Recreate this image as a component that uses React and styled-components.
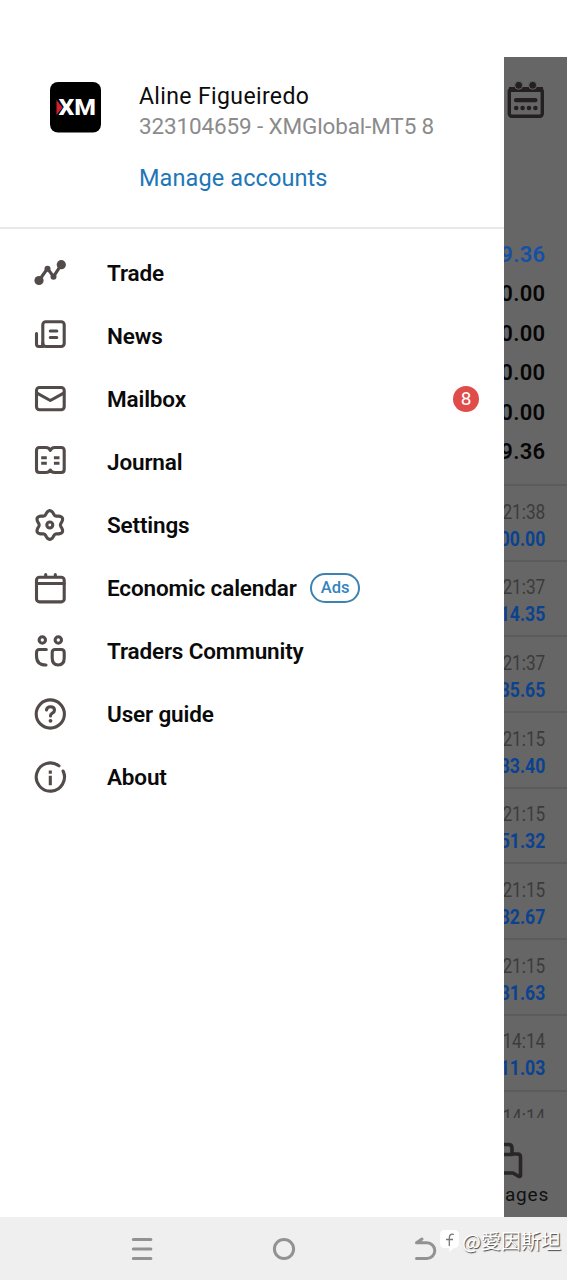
import React from 'react';
import styled, { createGlobalStyle } from 'styled-components';

const GlobalStyle = createGlobalStyle`
  * {
    box-sizing: border-box;
  }
  body {
    margin: 0;
    background: #fff;
    font-family: Roboto, "Liberation Sans", sans-serif;
  }
`;

const Screen = styled.div`
  position: relative;
  display: flex;
  flex-direction: column;
  width: 567px;
  height: 1280px;
  padding-top: 57px;
  overflow: hidden;
`;

const Body = styled.div`
  display: flex;
  height: 1160px;
`;

const Drawer = styled.aside`
  width: 504px;
  background: #fff;
`;

const Profile = styled.header`
  display: flex;
  gap: 38px;
  height: 172px;
  padding: 25px 0 0 50px;
  border-bottom: 2px solid #e8e8e8;
`;

const Logo = styled.svg`
  width: 51px;
  height: 51px;
`;

const ProfileText = styled.div`
  display: flex;
  flex-direction: column;
  white-space: nowrap;
`;

const Name = styled.div`
  margin-top: 1px;
  font-size: 23px;
  line-height: 28px;
  letter-spacing: 0.37px;
  color: #0c0c0c;
`;

const Account = styled.div`
  margin-top: 1px;
  font-size: 22.5px;
  line-height: 28px;
  letter-spacing: -0.14px;
  color: #8b8b8b;
`;

const ManageLink = styled.a`
  margin-top: 24px;
  font-size: 23.5px;
  line-height: 28px;
  letter-spacing: 0.1px;
  color: #2077b8;
`;

const Menu = styled.ul`
  margin: 0;
  padding: 12px 25px 0 32px;
  list-style: none;
`;

const MenuItem = styled.li`
  display: flex;
  align-items: center;
  height: 63px;
`;

const MenuIcon = styled.svg`
  width: 36px;
  height: 36px;
  margin-right: 39px;
  fill: none;
  stroke: #524b4a;
  stroke-width: 3.1;
  stroke-linecap: round;
  stroke-linejoin: round;
`;

const MenuLabel = styled.span`
  font-size: 22.5px;
  font-weight: 600;
  line-height: 28px;
  letter-spacing: -0.15px;
  white-space: nowrap;
  color: #0a0a0a;
`;

const Ads = styled.span`
  display: flex;
  align-items: center;
  justify-content: center;
  width: 50px;
  height: 30px;
  margin-left: 13.5px;
  border: 2px solid #3d82b0;
  border-radius: 15px;
  font-size: 16.5px;
  font-weight: 500;
  color: #3584bd;
`;

const Count = styled.span`
  display: flex;
  align-items: center;
  justify-content: center;
  width: 26px;
  height: 26px;
  margin-left: auto;
  border-radius: 50%;
  background: #e04c4a;
  font-size: 19px;
  color: #fff;
`;

const Behind = styled.section`
  display: flex;
  flex-direction: column;
  width: 63px;
  overflow: hidden;
  background: #666;
`;

const TopBar = styled.div`
  height: 178px;
  padding: 24px 0 0 3px;
`;

const Balance = styled.div`
  display: flex;
  flex-direction: column;
  height: 249px;
  padding-right: 21.5px;
`;

const BalanceValue = styled.div`
  display: flex;
  justify-content: flex-end;
  font-size: 22px;
  font-weight: 600;
  line-height: 39.4px;
  letter-spacing: 0.3px;
  color: ${({ $blue }) => ($blue ? '#1550a8' : '#060606')};
`;

const Deals = styled.div`
  height: 634px;
  overflow: hidden;
`;

const Deal = styled.div`
  display: flex;
  flex-direction: column;
  align-items: flex-end;
  height: 75.7px;
  padding: 12.5px 21.5px 0 0;
  border-top: 2px solid #5c5c5c;
`;

const DealTime = styled.span`
  font-size: 21px;
  line-height: 27px;
  color: #3b3b3b;
  transform: scaleX(0.82);
  transform-origin: right;
`;

const DealValue = styled.span`
  font-size: 21px;
  font-weight: 700;
  line-height: 27px;
  color: #0b4290;
  transform: scaleX(0.84);
  transform-origin: right;
`;

const Tab = styled.div`
  display: flex;
  flex-direction: column;
  align-items: flex-end;
  flex: 1;
  padding: 22px 18px 0 0;
  font-size: 19px;
  line-height: 26px;
  letter-spacing: 0.8px;
  color: #101010;
`;

const TabIcon = styled.svg`
  flex: none;
  width: 44px;
  height: 42px;
  margin-right: 25px;
  fill: none;
  stroke: #2a2626;
  stroke-width: 3.6;
  stroke-linejoin: round;
  stroke-linecap: round;
`;

const NavBar = styled.nav`
  display: flex;
  height: 63px;
  padding: 0 71px;
  background: #efefef;
`;

const NavButton = styled.div`
  display: flex;
  align-items: center;
  justify-content: center;
  flex: 1;
  svg {
    width: 26px;
    height: 26px;
    fill: none;
    stroke: #929292;
    stroke-width: 3;
    stroke-linecap: round;
    stroke-linejoin: round;
  }
`;

const Watermark = styled.div`
  position: absolute;
  right: 6px;
  bottom: 24px;
  display: flex;
  align-items: center;
  gap: 2px;
  font-family: "Noto Sans CJK TC", sans-serif;
  font-size: 20px;
  line-height: 30px;
  color: #fff;
  text-shadow: 1px 1px 1px #444;
`;

// wavy six-tooth outline around (17.8, 18)
const gearPath = () => {
  const points = [];
  for (let i = 0; i < 72; i++) {
    const a = (i * Math.PI) / 36;
    const r = 12.5 + 1.9 * Math.cos(6 * a);
    points.push(`${(17.8 + r * Math.sin(a)).toFixed(2)} ${(18 - r * Math.cos(a)).toFixed(2)}`);
  }
  return `M${points.join('L')}Z`;
};

const icons = {
  trade: (
    <>
      <path d="M7 25.5 15.5 13.5 21.5 21.7 29.3 9.7" />
      <g fill="#524b4a" stroke="none">
        <circle cx="7" cy="25.5" r="4.6" />
        <circle cx="15.5" cy="13.7" r="3" />
        <circle cx="21.5" cy="21.7" r="3" />
        <circle cx="29.3" cy="9.7" r="4.6" />
      </g>
    </>
  ),
  news: (
    <>
      <rect x="10.8" y="3.8" width="21.4" height="24.7" rx="3" />
      <path d="M4.5 15.5V26q0 2.5 2.3 2.5H10.8V25" />
      <path d="M18.3 13h6.5M18.3 19.5h6.5" />
    </>
  ),
  mail: (
    <>
      <rect x="4.5" y="6.5" width="27.7" height="22.3" rx="3" />
      <path d="M5 12.2 18.3 19.5 31.7 12.2" />
    </>
  ),
  journal: (
    <>
      <path d="M18.3 6.5Q17 3.5 14 3.5H7.5q-3 0-3 3v19q0 3 3 3H14q3 0 4.3-2.5 1.3 2.5 4.3 2.5h6.6q3 0 3-3v-19q0-3-3-3h-6.6q-3 0-4.3 3Z" />
      <path strokeLinecap="butt" d="M9.2 13.7h5.6M9.2 19.3h5.6M21.9 13.7h5.6M21.9 19.3h5.6" />
    </>
  ),
  settings: (
    <>
      <path d={gearPath()} />
      <circle cx="17.8" cy="18" r="3" />
    </>
  ),
  calendar: (
    <>
      <rect x="4.5" y="7.3" width="27.7" height="24.6" rx="3" />
      <path d="M4.5 13.5h27.7M13.7 4.5v2M23.3 4.5v2" />
    </>
  ),
  community: (
    <>
      <circle cx="10.3" cy="7" r="3.2" />
      <circle cx="26.3" cy="7" r="3.2" />
      <path d="M14.3 16.5H7.5q-3 0-3 3V23q0 9 9.5 9" />
      <path d="M23.2 16.5h6q3 0 3 3V25q0 7-6 7t-6-7v-5.5q0-3 3-3Z" />
    </>
  ),
  help: (
    <>
      <circle cx="18.3" cy="18" r="14.1" />
      <path d="M14.5 14q.4-3.2 4-3.2 4 0 4 3.4 0 1.8-2.2 3-1.8 1-1.8 2.8" />
      <circle cx="18.5" cy="24.8" r="1.9" fill="#524b4a" stroke="none" />
    </>
  ),
  about: (
    <>
      <path d="M27 6.9A14.1 14.1 0 1 0 31.1 12" />
      <path strokeLinecap="butt" d="M18.3 16.8v9.4M18.3 11.5v3.2" />
    </>
  ),
};

const menu = [
  { icon: 'trade', label: 'Trade' },
  { icon: 'news', label: 'News' },
  { icon: 'mail', label: 'Mailbox', count: 8 },
  { icon: 'journal', label: 'Journal' },
  { icon: 'settings', label: 'Settings' },
  { icon: 'calendar', label: 'Economic calendar', ads: true },
  { icon: 'community', label: 'Traders Community' },
  { icon: 'help', label: 'User guide' },
  { icon: 'about', label: 'About' },
];

const balance = ['9.36', '0.00', '0.00', '0.00', '0.00', '9.36'];

const deals = [
  ['21:38', '00.00'],
  ['21:37', '14.35'],
  ['21:37', '35.65'],
  ['21:15', '33.40'],
  ['21:15', '51.32'],
  ['21:15', '32.67'],
  ['21:15', '31.63'],
  ['14:14', '11.03'],
  ['14:14', ''],
];

function XmLogo() {
  return (
    <Logo viewBox="0 0 51 51">
      <rect width="51" height="50.5" rx="8" fill="#000" />
      <path d="M6.5 18 12.5 25.5 6.5 33Z" fill="#d3202c" />
      <text
        x="8.5"
        y="33"
        fill="#fff"
        fontFamily="Roboto"
        fontWeight="800"
        fontSize="21.5"
        textLength="37.5"
        lengthAdjust="spacingAndGlyphs"
      >
        XM
      </text>
    </Logo>
  );
}

function CalendarButton() {
  return (
    <svg width="38" height="38" viewBox="0 0 38 38">
      <rect x="2.3" y="8" width="33" height="27.2" rx="2.5" fill="none" stroke="#242021" strokeWidth="3.4" />
      <path d="M2 6h34v5H2z" fill="#242021" />
      <g fill="#242021" stroke="#666" strokeWidth="1">
        <circle cx="11.7" cy="4.3" r="4" />
        <circle cx="25.7" cy="4.3" r="4" />
      </g>
      <rect x="7" y="17" width="23.5" height="4.2" rx="2" fill="#242021" />
      <g fill="#242021">
        <circle cx="9.2" cy="27" r="2.3" />
        <circle cx="15.6" cy="27" r="2.3" />
        <circle cx="22" cy="27" r="2.3" />
        <circle cx="28.4" cy="27" r="2.3" />
      </g>
    </svg>
  );
}

function App() {
  return (
    <Screen>
      <GlobalStyle />
      <Body>
        <Drawer>
          <Profile>
            <XmLogo />
            <ProfileText>
              <Name>Aline Figueiredo</Name>
              <Account>323104659 - XMGlobal-MT5 8</Account>
              <ManageLink>Manage accounts</ManageLink>
            </ProfileText>
          </Profile>
          <Menu>
            {menu.map((item) => (
              <MenuItem key={item.label}>
                <MenuIcon viewBox="0 0 36 36">{icons[item.icon]}</MenuIcon>
                <MenuLabel>{item.label}</MenuLabel>
                {item.ads && <Ads>Ads</Ads>}
                {item.count && <Count>{item.count}</Count>}
              </MenuItem>
            ))}
          </Menu>
        </Drawer>
        <Behind>
          <TopBar>
            <CalendarButton />
          </TopBar>
          <Balance>
            {balance.map((value, i) => (
              <BalanceValue key={i} $blue={i === 0}>{value}</BalanceValue>
            ))}
          </Balance>
          <Deals>
            {deals.map(([time, value], i) => (
              <Deal key={i}>
                <DealTime>{time}</DealTime>
                <DealValue>{value}</DealValue>
              </Deal>
            ))}
          </Deals>
          <Tab>
            <TabIcon viewBox="0 0 44 42">
              <path d="M1 4.5H28.5q3.5 0 3.5 3.5v6h5.5q3 0 3 3V35.5q0 1.500-2 .8L33 33H1M1 14.5H32" />
            </TabIcon>
            Messages
          </Tab>
        </Behind>
      </Body>
      <NavBar>
        <NavButton>
          <svg viewBox="0 0 26 26">
            <path d="M4.3 3.5h17.6M4.3 13h17.6M4.3 22.5h17.6" />
          </svg>
        </NavButton>
        <NavButton>
          <svg viewBox="0 0 26 26">
            <circle cx="13" cy="13" r="9.6" />
          </svg>
        </NavButton>
        <NavButton>
          <svg viewBox="0 0 26 26">
            <path d="M10 3 4.5 6.800H15a7.800 7.800 0 0 1 0 15.600H4.500" />
          </svg>
        </NavButton>
      </NavBar>
      <Watermark>
        <svg width="20" height="24" viewBox="0 0 20 24">
          <path d="M5 1H14q5 0 5 5v8q0 5-5 5l-5 4 .5-4H5q-5 0-5-5V6Q0 1 5 1Z" fill="#fff" />
          <path d="M14 5.5Q9.5 4 9.3 9v8M6 10.5h7" fill="none" stroke="#777" strokeWidth="1.3" />
        </svg>
        <span>@愛因斯坦</span>
      </Watermark>
    </Screen>
  );
}

export default App;
